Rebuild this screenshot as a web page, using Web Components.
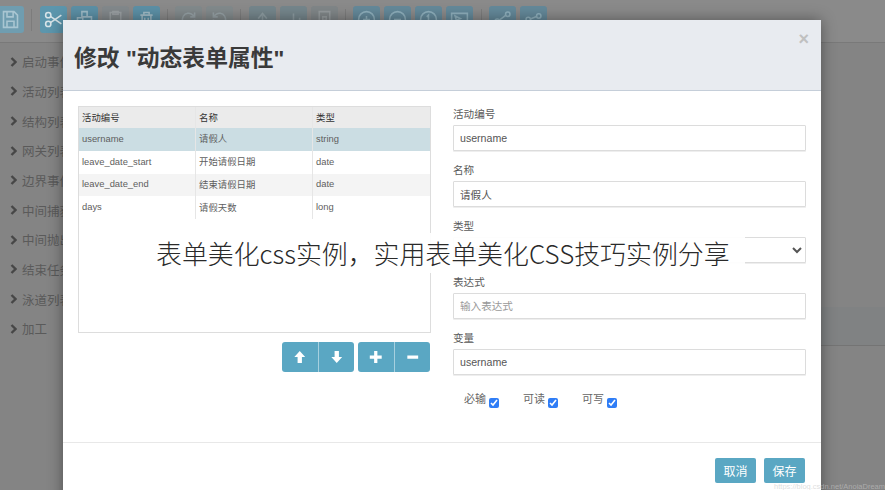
<!DOCTYPE html>
<html lang="zh">
<head>
<meta charset="utf-8">
<style>
html, body { margin: 0; height: 100%; overflow: hidden; }
body { font-family: "Liberation Sans", "Noto Sans CJK SC", sans-serif; width: 885px; height: 490px; position: relative; }
</style>
</head>
<body>
<editor-page></editor-page>
<edit-modal title-text='修改 "动态表单属性"'></edit-modal>
<banner-text>表单美化css实例，实用表单美化CSS技巧实例分享</banner-text>
<water-mark>https://blog.csdn.net/AnoiaDream</water-mark>

<script>
const ICONS = {
    save: '<path d="M4 3h12l4 4v14H4z M8 3v6h7V3 M8 21v-7h8v7"/>',
    cut: '<circle cx="6" cy="7" r="3"/><circle cx="6" cy="17" r="3"/><path d="M8.5 8.5 21 17M8.5 15.5 21 7"/>',
    copy: '<path d="M9 3h6v6H9z M4 10h6v10H4z M14 9h6v11h-7"/>',
    paste: '<path d="M6 4h12v17H6z M9 3h6v3H9z"/>',
    trash: '<path d="M5 7h14M9 7V4h6v3M7 7v14h10V7M10 10v8M14 10v8"/>',
    redo: '<path d="M19 12a7 7 0 1 1-2-5l2 2M19 4v5h-5"/>',
    undo: '<path d="M5 12a7 7 0 1 0 2-5L5 9M5 4v5h5"/>',
    up: '<path d="M12 21V7M7 11l5-6 5 6"/>',
    bars: '<path d="M5 21v-7M12 21V5M19 21v-11"/>',
    doc: '<path d="M6 3h12v18H6z M10 9h4v4h-4z"/>',
    zoomin: '<circle cx="12" cy="12" r="9"/><path d="M8 12h8M12 8v8"/>',
    zoomout: '<circle cx="12" cy="12" r="9"/><path d="M8 12h8"/>',
    one: '<circle cx="12" cy="12" r="9"/><path d="M10 9l2-2v10"/>',
    fit: '<path d="M3 5h18v14H3z M7 8l6 3-3 1-1 3z"/>',
    link1: '<circle cx="18" cy="6" r="2.5"/><circle cx="6" cy="14" r="2.5"/><path d="M8 13l8-6M6 17v4"/>',
    link2: '<circle cx="18" cy="8" r="2.5"/><circle cx="6" cy="12" r="2.5"/><path d="M8.5 11.5l7-3M6 15v6"/>'
};

// colours are the dimmed ones, as seen under the modal backdrop
class ToolButton extends HTMLElement {
    connectedCallback() {
        const icon = ICONS[this.getAttribute('icon')];
        this.attachShadow({ mode: 'open' });
        this.shadowRoot.innerHTML = `
            <style>
                :host {
                    display: flex;
                    align-items: center;
                    justify-content: center;
                    width: 27px;
                    height: 27px;
                    border-radius: 3px;
                    background-color: var(--tone);
                }
                svg { width: 21px; height: 21px; fill: none; stroke: var(--ink); stroke-width: 1.8; }
            </style>
            <svg viewBox="0 0 24 24">${icon}</svg>
        `;
    }
}
customElements.define('tool-button', ToolButton);

class PageToolbar extends HTMLElement {
    connectedCallback() {
        this.attachShadow({ mode: 'open' });
        const groups = [
            [['save', '#6f9db0', '#a9c6d2']],
            [['cut', '#5c96ad', '#d8e4e8'], ['copy', '#5c90a6', '#9fbcc8'], ['paste', '#83898c', '#9a9fa2'], ['trash', '#5c90a6', '#a0bac5']],
            [['redo', '#828a8c', '#95a0a4'], ['undo', '#828a8c', '#95a0a4']],
            [['up', '#75868c', '#8d9ca1'], ['bars', '#75868c', '#8d9ca1'], ['doc', '#808688', '#959b9d']],
            [['zoomin', '#64899a', '#8fb0bd'], ['zoomout', '#64899a', '#8fb0bd'], ['one', '#64899a', '#8fb0bd'], ['fit', '#64899a', '#8fb0bd']],
            [['link1', '#64899a', '#8fb0bd'], ['link2', '#64899a', '#8fb0bd']]
        ];
        const html = groups.map(g => '<div class="group">' + g.map(b =>
            `<tool-button icon="${b[0]}" style="--tone:${b[1]};--ink:${b[2]}"></tool-button>`
        ).join('') + '</div>').join('<div class="sep"></div>');
        this.shadowRoot.innerHTML = `
            <style>
                :host {
                    display: flex;
                    align-items: flex-start;
                    height: 43px;
                    box-sizing: border-box;
                    padding-top: 6px;
                    margin-left: -3px;
                    border-bottom: 1px solid #797979;
                    background-color: #8a8a8a;
                }
                .group { display: flex; gap: 4px; }
                .sep { width: 1px; height: 22px; background-color: #7c7c7c; margin: 3px 7.3px 0; }
            </style>
            ${html}
        `;
    }
}
customElements.define('page-toolbar', PageToolbar);

class SideList extends HTMLElement {
    connectedCallback() {
        this.attachShadow({ mode: 'open' });
        const items = ['启动事件', '活动列表', '结构列表', '网关列表', '边界事件', '中间捕获', '中间抛出', '结束任务', '泳道列表', '加工'];
        this.shadowRoot.innerHTML = `
            <style>
                :host {
                    display: block;
                    flex: 1;
                    padding: 4px 0 0 10px;
                    font-size: 12.5px;
                    color: #5a5a5a;
                }
                .row { display: flex; align-items: center; gap: 5px; height: 29.67px; white-space: nowrap; }
                svg { width: 7px; height: 10px; fill: none; stroke: #474747; stroke-width: 2.4; }
            </style>
            ${items.map(t => `<div class="row"><svg viewBox="0 0 7 10"><path d="M1.5 1l4 4-4 4"/></svg><span>${t}</span></div>`).join('')}
        `;
    }
}
customElements.define('side-list', SideList);

class EditorPage extends HTMLElement {
    connectedCallback() {
        this.attachShadow({ mode: 'open' });
        this.shadowRoot.innerHTML = `
            <style>
                :host { display: block; width: 885px; height: 490px; background-color: #848484; overflow: hidden; }
                .below { display: flex; }
                .right { width: 64px; padding-top: 264px; }
                .band { height: 38px; background-color: #808283; border-bottom: 1px solid #747474; }
            </style>
            <page-toolbar></page-toolbar>
            <div class="below">
                <side-list></side-list>
                <div class="right"><div class="band"></div></div>
            </div>
        `;
    }
}
customElements.define('editor-page', EditorPage);

class DataTable extends HTMLElement {
    connectedCallback() {
        this.attachShadow({ mode: 'open' });
        const rows = [
            ['username', '请假人', 'string', 'sel'],
            ['leave_date_start', '开始请假日期', 'date', ''],
            ['leave_date_end', '结束请假日期', 'date', 'alt'],
            ['days', '请假天数', 'long', '']
        ];
        this.shadowRoot.innerHTML = `
            <style>
                :host {
                    display: block;
                    width: 353px;
                    height: 227px;
                    box-sizing: border-box;
                    border: 1px solid #ddd;
                    font-size: 9.4px;
                    color: #5e5e5e;
                    overflow: hidden;
                }
                .row { display: grid; grid-template-columns: 117px 117px 1fr; height: 22.8px; align-items: stretch; }
                .row > div { display: flex; align-items: center; padding: 0 0 2px 3px; border-right: 1px solid #e6e6e6; }
                .row > div:last-child { border-right: 0; }
                .head { background-color: #ebebeb; height: 21px; color: #333; }
                .sel { background-color: #cbdde3; }
                .alt { background-color: #f4f4f4; }
            </style>
            <div class="row head"><div>活动编号</div><div>名称</div><div>类型</div></div>
            ${rows.map(r => `<div class="row ${r[3]}"><div>${r[0]}</div><div>${r[1]}</div><div>${r[2]}</div></div>`).join('')}
        `;
    }
}
customElements.define('data-table', DataTable);

class IconGroup extends HTMLElement {
    connectedCallback() {
        this.attachShadow({ mode: 'open' });
        this.shadowRoot.innerHTML = `
            <style>
                :host {
                    display: flex;
                    height: 30px;
                    width: 72px;
                    border-radius: 3px;
                    overflow: hidden;
                    background-color: #5aa7c3;
                }
                ::slotted(svg) {
                    flex: 1;
                    height: 30px;
                    padding: 8.5px 0;
                    box-sizing: border-box;
                    fill: #fff;
                }
                ::slotted(svg:first-child) { border-right: 1px solid #a6d0df; }
            </style>
            <slot></slot>
        `;
    }
}
customElements.define('icon-group', IconGroup);

class FormField extends HTMLElement {
    connectedCallback() {
        const label = this.getAttribute('label');
        const value = this.getAttribute('value') || '';
        const hint = this.getAttribute('hint') || '';
        const isSelect = this.hasAttribute('select');
        const control = isSelect
            ? `<select><option>${value}</option></select>`
            : `<input value="${value}" placeholder="${hint}">`;
        this.attachShadow({ mode: 'open' });
        this.shadowRoot.innerHTML = `
            <style>
                :host { display: block; height: 56px; font-size: 10.6px; color: #5a5a5a; }
                label { display: block; height: 19px; line-height: 17px; }
                input, select {
                    display: block;
                    width: 353px;
                    height: 26px;
                    box-sizing: border-box;
                    border: 1px solid #dcdcdc;
                    box-shadow: 0 1px 0 #eee;
                    border-radius: 1px;
                    background-color: #fff;
                    padding: 0 6px;
                    font: 10.6px "Liberation Sans", "Noto Sans CJK SC", sans-serif;
                    color: #555;
                    outline: 0;
                }
                input::placeholder { color: #999; }
            </style>
            <label>${label}</label>
            ${control}
        `;
    }
}
customElements.define('form-field', FormField);

class CheckItem extends HTMLElement {
    connectedCallback() {
        this.attachShadow({ mode: 'open' });
        this.shadowRoot.innerHTML = `
            <style>
                :host { display: flex; align-items: flex-start; gap: 3px; font-size: 11px; line-height: 14px; color: #666; }
                input { margin: 6px 0 0; width: 10px; height: 10px; accent-color: #2f7df6; }
            </style>
            <span><slot></slot></span><input type="checkbox" checked>
        `;
    }
}
customElements.define('check-item', CheckItem);

class EditModal extends HTMLElement {
    connectedCallback() {
        this.attachShadow({ mode: 'open' });
        this.shadowRoot.innerHTML = `
            <style>
                :host {
                    position: absolute;
                    left: 63px;
                    top: 20px;
                    width: 758px;
                    height: 490px;
                    background-color: #fff;
                    box-shadow: 0 0 14px rgba(0, 0, 0, 0.4);
                    display: block;
                    color: #333;
                }
                header {
                    height: 71px;
                    box-sizing: border-box;
                    background-color: #e8ebf0;
                    border-bottom: 1px solid #c5ced9;
                    display: flex;
                    align-items: center;
                    justify-content: space-between;
                    padding: 2px 12px 0 11px;
                }
                h3 { margin: 0; font-size: 22.8px; font-weight: 700; color: #3a3a3a; }
                .close { align-self: flex-start; margin-top: 7px; font-size: 18px; color: #c0c0c0; font-weight: 700; }
                main {
                    display: grid;
                    grid-template-columns: 353px 353px;
                    gap: 22px;
                    padding: 15px 15px 0;
                    height: 351px;
                    box-sizing: border-box;
                }
                .btns { display: flex; justify-content: flex-end; gap: 4px; margin-top: 9px; margin-right: 1px; }
                .checks { display: flex; gap: 24px; padding: 6px 0 0 11px; }
                footer {
                    height: 68px;
                    box-sizing: border-box;
                    border-top: 1px solid #e8e8e8;
                    display: flex;
                    justify-content: flex-end;
                    gap: 8px;
                    padding: 15px 16px 0 0;
                }
                button {
                    width: 41px;
                    height: 25px;
                    border: 0;
                    border-radius: 2px;
                    background-color: #5aa7c3;
                    color: #fff;
                    font: 12px "Liberation Sans", "Noto Sans CJK SC", sans-serif;
                    padding: 0;
                }
            </style>
            <header>
                <h3>${this.getAttribute('title-text')}</h3>
                <span class="close">×</span>
            </header>
            <main>
                <div>
                    <data-table></data-table>
                    <div class="btns">
                        <icon-group>
                            <svg viewBox="0 0 24 24"><path d="M12 1 22 12H16V23H8V12H2Z"/></svg>
                            <svg viewBox="0 0 24 24"><path d="M12 23 22 12H16V1H8V12H2Z"/></svg>
                        </icon-group>
                        <icon-group>
                            <svg viewBox="0 0 24 24"><path d="M9 1h6v8h8v6h-8v8H9v-8H1V9h8z"/></svg>
                            <svg viewBox="0 0 24 24"><path d="M2 9h20v6H2z"/></svg>
                        </icon-group>
                    </div>
                </div>
                <div>
                    <form-field label="活动编号" value="username"></form-field>
                    <form-field label="名称" value="请假人"></form-field>
                    <form-field label="类型" value="string" select></form-field>
                    <form-field label="表达式" hint="输入表达式"></form-field>
                    <form-field label="变量" value="username"></form-field>
                    <div class="checks">
                        <check-item>必输</check-item>
                        <check-item>可读</check-item>
                        <check-item>可写</check-item>
                    </div>
                </div>
            </main>
            <footer>
                <button>取消</button>
                <button>保存</button>
            </footer>
        `;
    }
}
customElements.define('edit-modal', EditModal);

class BannerText extends HTMLElement {
    connectedCallback() {
        this.attachShadow({ mode: 'open' });
        this.shadowRoot.innerHTML = `
            <style>
                :host {
                    position: absolute;
                    left: 140px;
                    top: 233px;
                    width: 605px;
                    height: 40px;
                    box-sizing: border-box;
                    padding-left: 16px;
                    background-color: rgba(255, 255, 255, 0.93);
                    font: 300 25.9px/39px "Noto Sans CJK SC", sans-serif;
                    color: #2a2a2a;
                    white-space: nowrap;
                }
            </style>
            <slot></slot>
        `;
    }
}
customElements.define('banner-text', BannerText);

class WaterMark extends HTMLElement {
    connectedCallback() {
        this.attachShadow({ mode: 'open' });
        this.shadowRoot.innerHTML = `
            <style>
                :host {
                    position: absolute;
                    right: 0;
                    bottom: -1px;
                    font: 7.5px/8px "Liberation Sans", sans-serif;
                    color: rgba(200, 200, 200, 0.6);
                    white-space: nowrap;
                }
            </style>
            <slot></slot>
        `;
    }
}
customElements.define('water-mark', WaterMark);
</script>
</body>
</html>
